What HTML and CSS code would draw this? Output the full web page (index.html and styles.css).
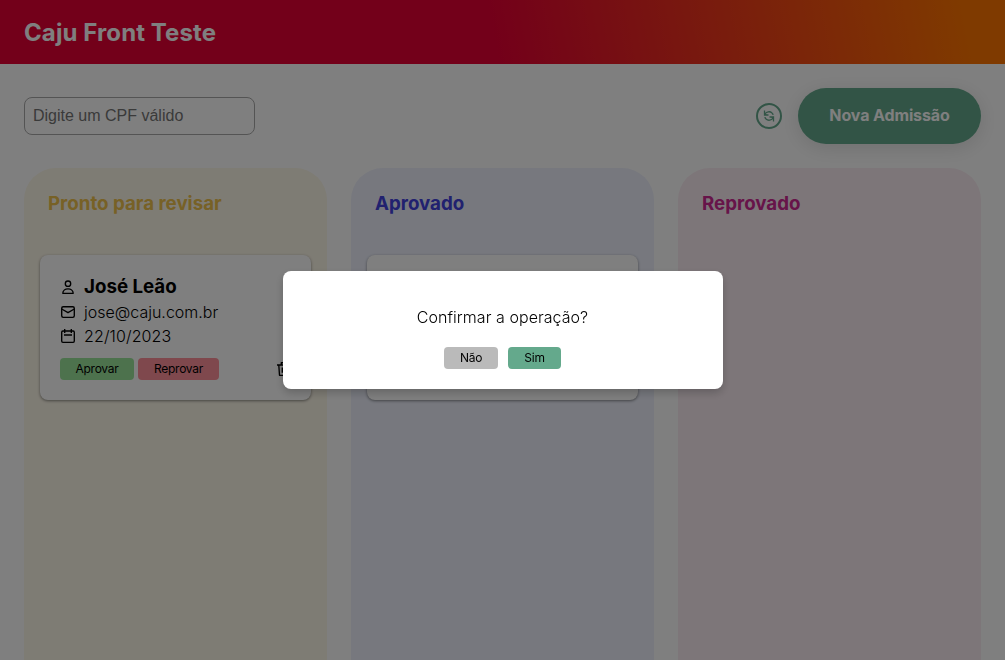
FILE: index.html
```html
<!DOCTYPE html>
<html lang="pt-BR">
<head>
<meta charset="utf-8">
<title>Caju Front Teste</title>
<link rel="stylesheet" href="styles.css">
</head>
<body>
<header class="header"><h1>Caju Front Teste</h1></header>
<main class="page">
  <div class="search">
    <input class="cpf" type="text" placeholder="Digite um CPF válido">
    <div class="actions">
      <button class="refresh" aria-label="Atualizar">
        <svg width="12" height="12" viewBox="0 0 24 24" fill="none" stroke="currentColor" stroke-width="2.6"><path d="M3 1v9h8M21 23v-9h-8M4 8c3-5 10-6 14-2 1.500 1 2 2 2 4M20 16c-3 5-10 6-14 2-1.500-1-2-2-2-4"/><path d="M3 5v5h5zM21 19v-5h-5z" fill="currentColor" stroke="none"/></svg>
      </button>
      <button class="new">Nova Admissão</button>
    </div>
  </div>
  <div class="board">
    <section class="column pending">
      <h3>Pronto para revisar</h3>
      <article class="card">
        <div class="row name"><svg class="icon" viewBox="0 0 16 16"><circle cx="8" cy="4.700" r="2.700"/><path d="M2.800 14.300c0-6 10.400-6 10.400 0z"/></svg><h3>José Leão</h3></div>
        <div class="row"><svg class="icon" viewBox="0 0 16 16"><rect x="1.700" y="2.700" width="12.600" height="10.600" rx="1.500"/><path d="M1.700 5L8 8.700 14.300 5"/></svg><p>jose@caju.com.br</p></div>
        <div class="row"><svg class="icon" viewBox="0 0 16 16"><rect x="1.700" y="3" width="12.600" height="11.300" rx="1.200"/><path d="M4.700 1v4M11.300 1v4M4 7h8"/></svg><p class="date">22/10/2023</p></div>
        <div class="buttons">
          <button class="small approve">Aprovar</button>
          <button class="small reprove">Reprovar</button>
          <svg class="icon trash" viewBox="0 0 16 16"><path d="M1 4h14M5.300 4V1.700h5.400V4M2.800 4l.7 10.300h9L13.200 4M6.300 6.500v5.300M9.700 6.500v5.300"/></svg>
        </div>
      </article>
    </section>
    <section class="column approved">
      <h3>Aprovado</h3>
      <article class="card"></article>
    </section>
    <section class="column reproved">
      <h3>Reprovado</h3>
    </section>
  </div>
</main>
<div class="overlay">
  <div class="modal" role="dialog">
    <p>Confirmar a operação?</p>
    <div class="choices">
      <button class="small no">Não</button>
      <button class="small yes">Sim</button>
    </div>
  </div>
</div>
</body>
</html>
```

FILE: styles.css
```css
* { box-sizing: border-box; }
body {
  margin: 0;
  height: 660px;
  overflow: hidden;
  background: #fff;
  color: #000;
  font-family: Inter, "Liberation Sans", sans-serif;
  font-size: 16px;
  font-weight: 300;
}
h1, h3, p { margin: 0; }
button { border: 0; font-family: inherit; color: #000; }
.header {
  height: 64px;
  padding: 2px 24px 0;
  display: flex;
  align-items: center;
  background: linear-gradient(79deg, #e70034 0%, #e70034 49%, #ff7500 96%);
  color: #fff;
}
.header h1 { font-size: 24px; line-height: 32px; font-weight: 700; letter-spacing: .1px; }
.page { padding: 24px; }
.search { display: flex; align-items: center; justify-content: space-between; height: 56px; }
.cpf {
  width: 231px;
  height: 38px;
  padding: 0 8px;
  border: 1px solid #a9a9a9;
  border-radius: 8px;
  background: #fff;
  font: 16px "Liberation Sans", sans-serif;
}
.cpf::placeholder { color: #757575; }
.actions { display: flex; align-items: center; gap: 16px; }
.refresh {
  width: 26px;
  height: 26px;
  padding: 0;
  display: flex;
  align-items: center;
  justify-content: center;
  border: 2px solid #64a98c;
  border-radius: 50%;
  background: none;
  color: #64a98c;
}
.new {
  width: 183px;
  height: 56px;
  padding: 0 0 2px;
  border-radius: 36px;
  background: #64a98c;
  color: #fff;
  font-size: 16px;
  font-weight: 700;
  letter-spacing: -.12px;
  box-shadow: 0 4px 20px 0 rgba(0, 0, 0, .12);
}
.board { display: grid; grid-template-columns: repeat(3, 1fr); gap: 24px; margin-top: 24px; }
.column { height: 492px; border-radius: 32px 32px 0 0; padding: 24px 16px; }
.column > h3 { margin: 0 8px 40px; font-size: 18.72px; line-height: 23px; font-weight: 700; }
.pending { background: #fdf8e9; }
.pending > h3 { color: #efc24d; }
.approved { background: #eef1fd; }
.approved > h3 { color: #4242df; }
.reproved { background: #fbedf3; }
.reproved > h3 { color: #ce2893; }
.card {
  height: 145px;
  padding: 20px;
  border-radius: 8px;
  background: #fff;
  box-shadow: 0 1px 3px rgba(0, 0, 0, .45);
}
.row { display: flex; align-items: center; gap: 8px; height: 24px; }
.row.name { padding-bottom: 1px; }
.row.name h3 { font-size: 18.72px; font-weight: 700; line-height: 22px; }
.row p { padding-top: 2px; }
.date { letter-spacing: .12px; }
.icon { width: 16px; height: 16px; flex: none; fill: none; stroke: currentColor; stroke-width: 1.35; stroke-linejoin: round; }
.row:not(.name) .icon { margin-top: 2px; }
.buttons { display: flex; align-items: center; gap: 4px; margin-top: 11px; }
.small { height: 22px; padding: 0; border-radius: 4px; font-size: 12px; line-height: 22px; font-weight: 400; letter-spacing: -.25px; }
.approve { width: 74px; background: #9be59b; }
.reprove { width: 81px; background: #ff919a; }
.trash { margin-left: auto; margin-right: -1px; }
.overlay {
  position: fixed;
  inset: 0;
  display: flex;
  align-items: center;
  justify-content: center;
  background: rgba(0, 0, 0, .5);
}
.modal {
  width: 440px;
  height: 118px;
  padding-top: 34px;
  border-radius: 8px;
  background: #fff;
  text-align: center;
  box-shadow: 0 4px 8px rgba(0, 0, 0, .2);
}
.modal p { line-height: 24px; letter-spacing: .05px; }
.choices { display: flex; justify-content: center; gap: 10px; margin-top: 18px; }
.no { width: 54px; background: #bababa; }
.yes { width: 53px; background: #64a98c; }
```
